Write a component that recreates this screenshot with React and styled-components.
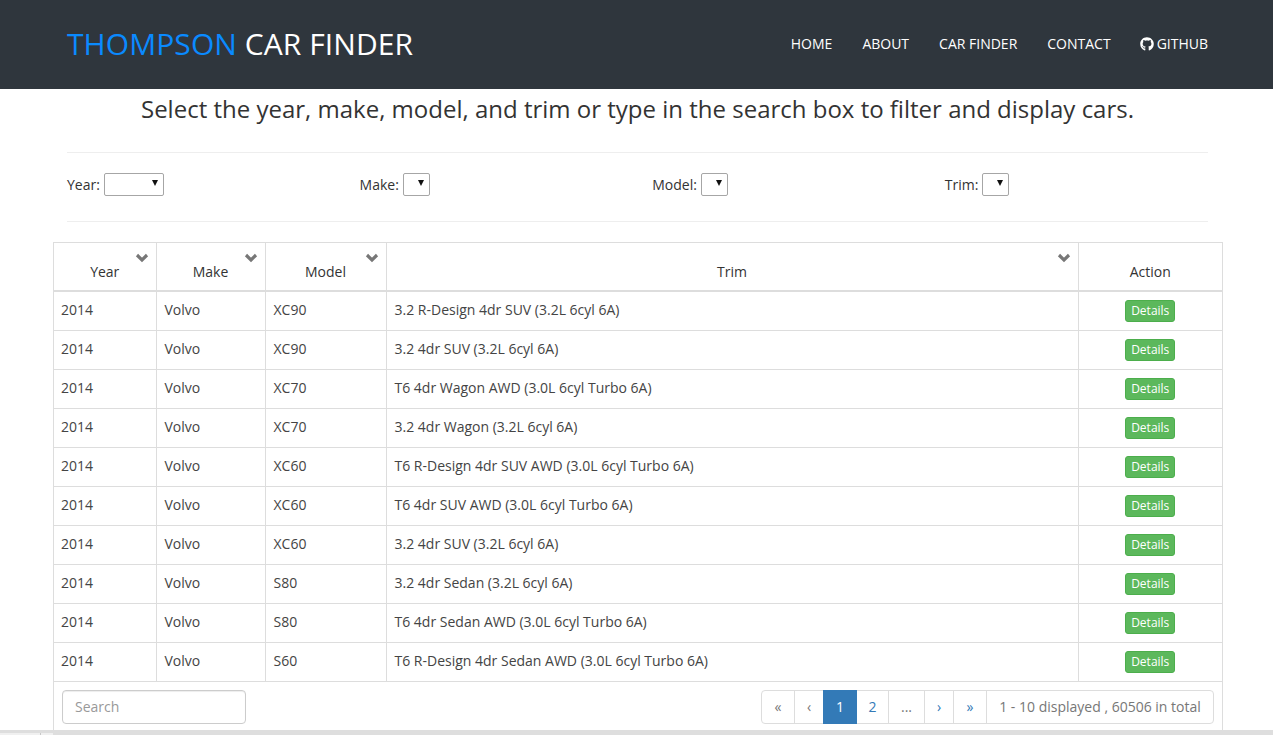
import React from "react";
import styled, { createGlobalStyle } from "styled-components";
import { FaGithub } from "react-icons/fa";

const Global = createGlobalStyle`
  html, body { margin: 0; padding: 0; height: 100%; overflow: hidden; background: #fff; }
  * { box-sizing: border-box; }
  body { font-family: "Open Sans", sans-serif; font-size: 14px; line-height: 20px; color: #333; }
`;

const Page = styled.div`
  height: 735px;
  overflow: hidden;
  position: relative;
`;

const Header = styled.header`
  height: 89px;
  background: #2f363d;
  padding: 0 65px 2px 67px;
  display: flex;
  align-items: center;
  justify-content: space-between;
`;

const Brand = styled.div`
  font-size: 30px;
  line-height: 40px;
  letter-spacing: 0.07px;
  color: #fff;
  & > span { color: #0a8aff; }
`;

const Nav = styled.nav`
  display: flex;
  gap: 30px;
`;

const NavLink = styled.a`
  color: #fff;
  font-size: 14px;
  display: flex;
  align-items: center;
  gap: 3px;
  & > svg { margin-left: -1px; }
`;

const Intro = styled.h4`
  margin: 7px 0 0 2px;
  height: 56px;
  text-align: center;
  font-size: 24px;
  line-height: 26px;
  font-weight: 400;
  color: #333;
`;

const Filters = styled.section`
  margin: 0 65px 20px 67px;
  border-top: 1px solid #eee;
  border-bottom: 1px solid #eee;
  height: 70px;
  padding-bottom: 5px;
  display: grid;
  grid-template-columns: repeat(4, 292.6px);
  align-items: center;
`;

const Field = styled.label`
  display: flex;
  align-items: center;
  gap: 4px;
`;

const Select = styled.span`
  display: block;
  position: relative;
  width: ${(p) => p.$w}px;
  height: 23px;
  margin-top: -1px;
  border: 1px solid #a6a6a6;
  border-radius: 2px;
  background: #fff;
  &::after {
    content: "";
    position: absolute;
    right: 5px;
    top: 6px;
    border-left: 3.5px solid transparent;
    border-right: 3.5px solid transparent;
    border-top: 6px solid #111;
  }
`;

const TableWrap = styled.div`
  margin-left: 53px;
  width: 1170px;
  border-left: 1px solid #ddd;
  border-right: 1px solid #ddd;
`;

const Table = styled.table`
  width: 100%;
  border-collapse: collapse;
  table-layout: fixed;
`;

const Th = styled.th`
  position: relative;
  height: 48px;
  padding: 8px;
  font-weight: 400;
  vertical-align: bottom;
  text-align: center;
  color: #333;
  border: 1px solid #ddd;
  border-bottom: 2px solid #ddd;
  &:first-child { border-left: 0; }
  &:last-child { border-right: 0; }
`;

const Sort = styled.svg`
  position: absolute;
  top: 10px;
  right: 7px;
  width: 14px;
  height: 10px;
`;

const Td = styled.td`
  padding: 8px;
  border: 1px solid #ddd;
  white-space: nowrap;
  vertical-align: top;
  color: #444;
  &:first-child { border-left: 0; padding-left: 7px; }
  &:last-child { border-right: 0; }
`;

const DetailsButton = styled.button`
  display: block;
  margin: 0 auto;
  height: 22px;
  width: 50px;
  padding: 0;
  font: 400 12px/18px "Open Sans", sans-serif;
  color: #fff;
  background: #5cb85c;
  border: 1px solid #4cae4c;
  border-radius: 3px;
`;

const Footer = styled.div`
  height: 49px;
  padding: 8px 8px 0;
  display: flex;
  justify-content: space-between;
  align-items: flex-start;
`;

const Search = styled.input`
  width: 184px;
  height: 34px;
  padding: 6px 12px;
  font: 14px/20px "Open Sans", sans-serif;
  color: #555;
  border: 1px solid #ccc;
  border-radius: 4px;
  box-shadow: inset 0 1px 1px rgba(0, 0, 0, 0.075);
  &::placeholder { color: #999; opacity: 1; }
`;

const Pager = styled.ul`
  display: flex;
  margin: 0;
  padding: 0;
  list-style: none;
  height: 34px;
`;

const Page_ = styled.li`
  height: 34px;
  width: ${(p) => p.$w}px;
  margin-left: -1px;
  display: flex;
  align-items: center;
  justify-content: center;
  border: 1px solid #ddd;
  color: ${(p) => (p.$muted ? "#777" : "#337ab7")};
  &:first-child { margin-left: 0; border-radius: 4px 0 0 4px; }
  &:last-child { border-radius: 0 4px 4px 0; }
`;

const ActivePage = styled(Page_)`
  color: #fff;
  background: #337ab7;
  border-color: #337ab7;
  position: relative;
`;

const Scrollbar = styled.div`
  position: absolute;
  left: 0;
  right: 0;
  bottom: 0;
  height: 5px;
  background: #dedede;
  &::before {
    content: "";
    position: absolute;
    left: 0;
    bottom: 0;
    width: 53px;
    height: 2px;
    background: #f0f0f0;
  }
  &::after {
    content: "";
    position: absolute;
    left: 40px;
    bottom: 0;
    width: 1px;
    height: 2px;
    background: #c8c8c8;
  }
`;

const rows = [
  ["XC90", "3.2 R-Design 4dr SUV (3.2L 6cyl 6A)"],
  ["XC90", "3.2 4dr SUV (3.2L 6cyl 6A)"],
  ["XC70", "T6 4dr Wagon AWD (3.0L 6cyl Turbo 6A)"],
  ["XC70", "3.2 4dr Wagon (3.2L 6cyl 6A)"],
  ["XC60", "T6 R-Design 4dr SUV AWD (3.0L 6cyl Turbo 6A)"],
  ["XC60", "T6 4dr SUV AWD (3.0L 6cyl Turbo 6A)"],
  ["XC60", "3.2 4dr SUV (3.2L 6cyl 6A)"],
  ["S80", "3.2 4dr Sedan (3.2L 6cyl 6A)"],
  ["S80", "T6 4dr Sedan AWD (3.0L 6cyl Turbo 6A)"],
  ["S60", "T6 R-Design 4dr Sedan AWD (3.0L 6cyl Turbo 6A)"],
];

const Chevron = () => (
  <Sort viewBox="0 0 14 10" aria-hidden="true">
    <path d="M2 2 L7 7 L12 2" fill="none" stroke="#777" strokeWidth="3.2" />
  </Sort>
);

const Head = ({ label, width, sortable = true }) => (
  <Th style={{ width }}>
    {label}
    {sortable && <Chevron />}
  </Th>
);

export default function App() {
  return (
    <Page>
      <Global />
      <Header>
        <Brand>
          <span>THOMPSON</span> CAR FINDER
        </Brand>
        <Nav>
          <NavLink>HOME</NavLink>
          <NavLink>ABOUT</NavLink>
          <NavLink>CAR FINDER</NavLink>
          <NavLink>CONTACT</NavLink>
          <NavLink>
            <FaGithub size={14} />
            GITHUB
          </NavLink>
        </Nav>
      </Header>
      <Intro>Select the year, make, model, and trim or type in the search box to filter and display cars.</Intro>
      <Filters>
        <Field>Year: <Select $w={60} /></Field>
        <Field>Make: <Select $w={27} /></Field>
        <Field>Model: <Select $w={27} /></Field>
        <Field>Trim: <Select $w={27} /></Field>
      </Filters>
      <TableWrap>
        <Table>
          <thead>
            <tr>
              <Head label="Year" width={102} />
              <Head label="Make" width={109} />
              <Head label="Model" width={121} />
              <Head label="Trim" width={692} />
              <Head label="Action" sortable={false} />
            </tr>
          </thead>
          <tbody>
            {rows.map(([model, trim], i) => (
              <tr key={i}>
                <Td>2014</Td>
                <Td>Volvo</Td>
                <Td>{model}</Td>
                <Td>{trim}</Td>
                <Td><DetailsButton>Details</DetailsButton></Td>
              </tr>
            ))}
          </tbody>
        </Table>
        <Footer>
          <Search placeholder="Search" />
          <Pager>
            <Page_ $w={34} $muted>«</Page_>
            <Page_ $w={30} $muted>‹</Page_>
            <ActivePage $w={34}>1</ActivePage>
            <Page_ $w={33}>2</Page_>
            <Page_ $w={37} $muted>...</Page_>
            <Page_ $w={30}>›</Page_>
            <Page_ $w={34}>»</Page_>
            <Page_ $w={228} $muted>1 - 10 displayed , 60506 in total</Page_>
          </Pager>
        </Footer>
      </TableWrap>
      <Scrollbar />
    </Page>
  );
}
